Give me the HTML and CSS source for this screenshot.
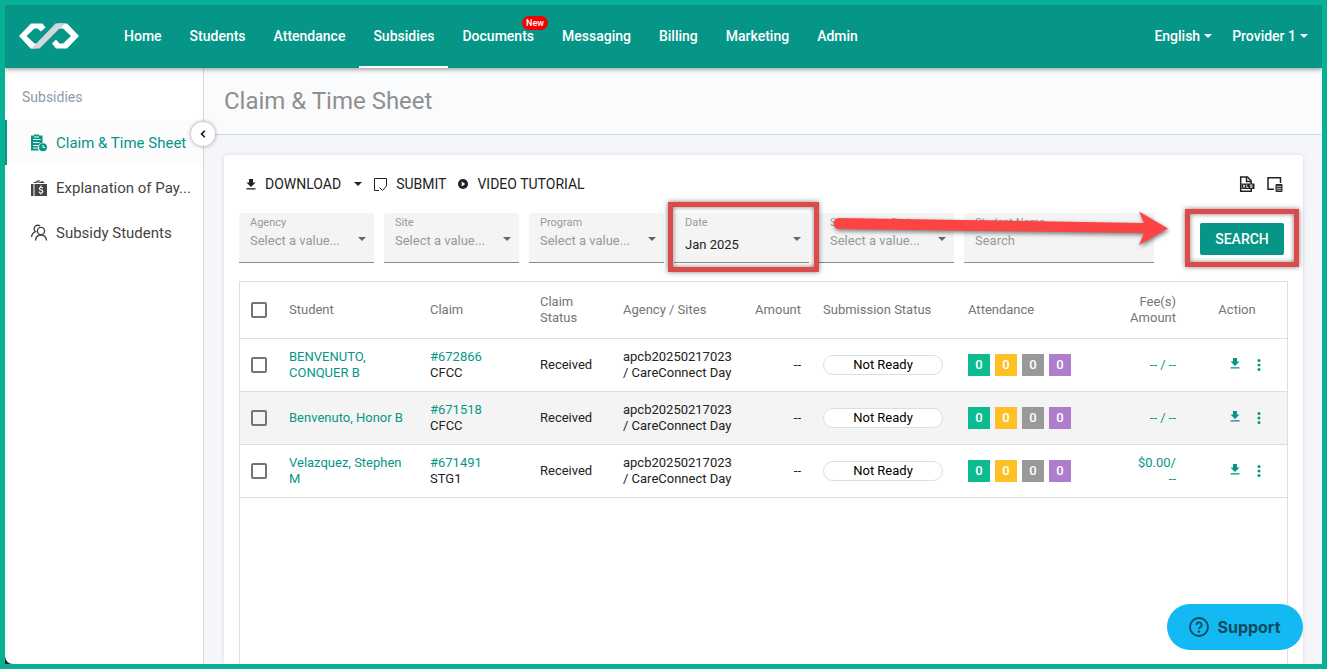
FILE: index.html
```html
<!DOCTYPE html>
<html lang="en">
<head>
    <meta charset="UTF-8">
    <meta name="viewport" content="width=device-width, initial-scale=1.0">
    <title>Claim &amp; Time Sheet</title>
    <link rel="stylesheet" href="styles.css">
</head>
<body>
    <svg class="defs" width="0" height="0" aria-hidden="true">
        <symbol id="icon-download" viewBox="0 0 10 11">
            <path d="M3 0h4v3.500h2.500L5 8 0.500 3.500H3z"/>
            <path d="M0.500 9.200h9v1.300h-9z"/>
        </symbol>
        <symbol id="icon-more" viewBox="0 0 4 12">
            <circle cx="2" cy="1.6" r="1.5"/>
            <circle cx="2" cy="6" r="1.5"/>
            <circle cx="2" cy="10.4" r="1.5"/>
        </symbol>
        <symbol id="icon-caret" viewBox="0 0 8 4">
            <path d="M0 0h8L4 4z"/>
        </symbol>
    </svg>

    <header class="navbar">
        <a href="#" class="logo" aria-label="Home page">
            <svg width="60" height="26" viewBox="0 0 60 26">
                <path d="M12 0.500h11.500L26.500 4.500 22 8.500 18.500 5.500H15.500L7.500 13l8 7.500h5L16 25.500h-4.500L0 13z" fill="#fff"/>
                <path d="M38 0.500h10L60 13 48 25.500H37L33 20.500l4-4 3.500 4h3.500l8-7.500-8-7.500H40z" fill="#fff"/>
                <path d="M12.500 25.500 36.500 0.500H46L41.500 5.500H40.500L20.500 25.500z" fill="#d3d6da"/>
            </svg>
        </a>
        <nav class="menu">
            <a href="#">Home</a>
            <a href="#">Students</a>
            <a href="#">Attendance</a>
            <a href="#" class="active">Subsidies</a>
            <a href="#">Documents<span class="badge">New</span></a>
            <a href="#">Messaging</a>
            <a href="#">Billing</a>
            <a href="#">Marketing</a>
            <a href="#">Admin</a>
        </nav>
        <div class="user-menu">
            <button type="button">English <svg width="8" height="4"><use href="#icon-caret"/></svg></button>
            <button type="button">Provider 1 <svg width="8" height="4"><use href="#icon-caret"/></svg></button>
        </div>
    </header>

    <div class="layout">
        <aside class="sidebar">
            <h2>Subsidies</h2>
            <a href="#" class="active">
                <svg width="18" height="18" viewBox="0 0 18 18">
                    <path fill="currentColor" fill-rule="evenodd" d="M1 1.500h3V0.500h5v1h3.500v7.200a5 5 0 0 0-3.800 7.800H1zM3 5v1h7.500V5zM3 8v1h6.500V8zM3 11v1h5v-1zM3 13.500v1h5v-1zM4 2.500v1h5v-1z"/>
                    <circle cx="13" cy="13.200" r="4" fill="currentColor"/>
                    <path d="M13 11v2.400h2.200" fill="none" stroke="#fff"/>
                </svg>
                <span>Claim &amp; Time Sheet</span>
            </a>
            <a href="#" title="Explanation of Payments">
                <svg width="18" height="18" viewBox="0 0 18 18" fill="currentColor">
                    <path d="M1 5h2.500v12H1zM2.500 4 9 1l1.200 1L6 4zM7 4l5.500-2L15 4z"/>
                    <path fill-rule="evenodd" d="M4.500 5H17v12H4.500zM10.300 6.500v1.200a2 2 0 0 0-1.500 1.900c0 1.200.9 1.600 1.900 1.900s1.400.5 1.400 1.100-.5.900-1.100.9-1.300-.3-1.400-1H8.500c.1 1 .8 1.700 1.800 1.900v1.100h1.200v-1.100c1-.2 1.800-.9 1.800-1.900 0-1.200-.9-1.700-2-2s-1.400-.5-1.400-1 .4-.8 1-.8 1.100.3 1.200.9h1.100c-.1-.9-.7-1.600-1.700-1.900V6.500z"/>
                </svg>
                <span>Explanation of Pay...</span>
            </a>
            <a href="#">
                <svg width="18" height="18" viewBox="0 0 18 18" fill="none" stroke="currentColor" stroke-width="1.400">
                    <circle cx="11" cy="7" r="3.600"/>
                    <path d="M5.500 16.500c.3-3.500 2-5.500 5.500-5.500s5.200 2 5.500 5.500"/>
                    <path d="M10 2a3.600 3.600 0 1 0-4.500 5.700C3 8.700 1.800 10.500 1.500 13"/>
                </svg>
                <span>Subsidy Students</span>
            </a>
            <button type="button" class="collapse" aria-label="Collapse sidebar">
                <svg width="6" height="8" viewBox="0 0 6 8"><path d="M4.800 0.800 1.600 4l3.200 3.200" fill="none" stroke="#111" stroke-width="1.600"/></svg>
            </button>
        </aside>

        <main class="content">
            <div class="page-title">
                <h1>Claim &amp; Time Sheet</h1>
            </div>

            <section class="card">
                <div class="toolbar">
                    <button type="button" class="download">
                        <svg width="10" height="11"><use href="#icon-download"/></svg>
                        Download
                        <svg class="caret" width="8" height="4"><use href="#icon-caret"/></svg>
                    </button>
                    <button type="button">
                        <svg width="13" height="13" viewBox="0 0 13 13" fill="none" stroke="currentColor"><path d="M5 12.500H0.500v-12h12V8L8.500 12.500 5.500 9.500"/></svg>
                        Submit
                    </button>
                    <button type="button">
                        <svg width="10" height="10" viewBox="0 0 10 10"><circle cx="5" cy="5" r="5"/><path d="M3.700 2.600 7.300 5 3.700 7.400z" fill="#fff"/></svg>
                        Video Tutorial
                    </button>
                    <div class="tools">
                        <button type="button" aria-label="Export to XLSX">
                            <svg width="16" height="16" viewBox="0 0 16 16">
                                <path d="M1.700 15.200h10.500V5L8.500 1H1.700z" fill="none" stroke="currentColor" stroke-width="1.500"/>
                                <path d="M7.500 1v4.500h4.500" fill="none" stroke="currentColor" stroke-width="1.500"/>
                                <path d="M2.500 7.500h13v5.500h-13z"/>
                                <path d="M4 8.700l2 3m0-3-2 3M7.700 8.500v2.900h1.800M13.500 8.900h-2.200v1.200h1.800v1.300h-2" fill="none" stroke="#fff" stroke-width=".8"/>
                            </svg>
                        </button>
                        <button type="button" aria-label="Choose columns">
                            <svg width="16" height="16" viewBox="0 0 16 16">
                                <path d="M7 13.300H1V1.700h12.500V7" fill="none" stroke="currentColor" stroke-width="1.500"/>
                                <rect x="8.500" y="8" width="7" height="8" rx="1"/>
                                <path d="M9.500 10.300h5M9.500 12.300h5M9.500 14.200h5" stroke="#fff" stroke-width=".7"/>
                            </svg>
                        </button>
                    </div>
                </div>

                <form class="filters">
                    <div class="field">
                        <label for="agency">Agency</label>
                        <select id="agency"><option>Select a value...</option></select>
                        <svg class="caret" width="8" height="4"><use href="#icon-caret"/></svg>
                    </div>
                    <div class="field">
                        <label for="site">Site</label>
                        <select id="site"><option>Select a value...</option></select>
                        <svg class="caret" width="8" height="4"><use href="#icon-caret"/></svg>
                    </div>
                    <div class="field">
                        <label for="program">Program</label>
                        <select id="program"><option>Select a value...</option></select>
                        <svg class="caret" width="8" height="4"><use href="#icon-caret"/></svg>
                    </div>
                    <div class="field filled highlight">
                        <label for="date">Date</label>
                        <select id="date"><option>Jan 2025</option></select>
                        <svg class="caret" width="8" height="4"><use href="#icon-caret"/></svg>
                    </div>
                    <div class="field">
                        <label for="status">Submission Status</label>
                        <select id="status"><option>Select a value...</option></select>
                        <svg class="caret" width="8" height="4"><use href="#icon-caret"/></svg>
                        <svg class="arrow" width="340" height="44" viewBox="0 0 340 44">
                            <path d="M7 7 312 12 307 0.500 336 17.500 307 34 312 22 7 18A5.500 5.500 0 0 1 7 7z"/>
                        </svg>
                    </div>
                    <div class="field wide">
                        <label for="student">Student Name</label>
                        <input type="text" id="student" placeholder="Search">
                    </div>
                    <div class="search highlight">
                        <button type="button">Search</button>
                    </div>
                </form>

                <div class="grid">
                    <table>
                        <colgroup>
                            <col class="col-check"><col class="col-student"><col class="col-claim"><col class="col-status"><col class="col-agency"><col class="col-amount"><col class="col-submission"><col><col class="col-amount"><col class="col-action">
                        </colgroup>
                        <thead>
                            <tr>
                                <th><input type="checkbox" aria-label="Select all"></th>
                                <th>Student</th>
                                <th>Claim</th>
                                <th>Claim Status</th>
                                <th>Agency / Sites</th>
                                <th class="right">Amount</th>
                                <th>Submission Status</th>
                                <th>Attendance</th>
                                <th class="right">Fee(s) Amount</th>
                                <th class="center">Action</th>
                            </tr>
                        </thead>
                        <tbody>
                            <tr>
                                <td><input type="checkbox" aria-label="Select BENVENUTO, CONQUER B"></td>
                                <td><a href="#">BENVENUTO, CONQUER B</a></td>
                                <td><a href="#">#672866</a><br>CFCC</td>
                                <td>Received</td>
                                <td class="sites">apcb20250217023<br>/ CareConnect Day</td>
                                <td class="right">--</td>
                                <td><span class="pill">Not Ready</span></td>
                                <td><div class="counts"><span class="green">0</span><span class="yellow">0</span><span class="gray">0</span><span class="purple">0</span></div></td>
                                <td class="right"><a href="#">-- / --</a></td>
                                <td><div class="actions">
                                    <button type="button" aria-label="Download"><svg width="10" height="11"><use href="#icon-download"/></svg></button>
                                    <button type="button" aria-label="More"><svg width="4" height="12"><use href="#icon-more"/></svg></button>
                                </div></td>
                            </tr>
                            <tr>
                                <td><input type="checkbox" aria-label="Select Benvenuto, Honor B"></td>
                                <td><a href="#">Benvenuto, Honor B</a></td>
                                <td><a href="#">#671518</a><br>CFCC</td>
                                <td>Received</td>
                                <td class="sites">apcb20250217023<br>/ CareConnect Day</td>
                                <td class="right">--</td>
                                <td><span class="pill">Not Ready</span></td>
                                <td><div class="counts"><span class="green">0</span><span class="yellow">0</span><span class="gray">0</span><span class="purple">0</span></div></td>
                                <td class="right"><a href="#">-- / --</a></td>
                                <td><div class="actions">
                                    <button type="button" aria-label="Download"><svg width="10" height="11"><use href="#icon-download"/></svg></button>
                                    <button type="button" aria-label="More"><svg width="4" height="12"><use href="#icon-more"/></svg></button>
                                </div></td>
                            </tr>
                            <tr>
                                <td><input type="checkbox" aria-label="Select Velazquez, Stephen M"></td>
                                <td><a href="#">Velazquez, Stephen<br>M</a></td>
                                <td><a href="#">#671491</a><br>STG1</td>
                                <td>Received</td>
                                <td class="sites">apcb20250217023<br>/ CareConnect Day</td>
                                <td class="right">--</td>
                                <td><span class="pill">Not Ready</span></td>
                                <td><div class="counts"><span class="green">0</span><span class="yellow">0</span><span class="gray">0</span><span class="purple">0</span></div></td>
                                <td class="right"><a href="#">$0.00/<br>--</a></td>
                                <td><div class="actions">
                                    <button type="button" aria-label="Download"><svg width="10" height="11"><use href="#icon-download"/></svg></button>
                                    <button type="button" aria-label="More"><svg width="4" height="12"><use href="#icon-more"/></svg></button>
                                </div></td>
                            </tr>
                        </tbody>
                    </table>
                </div>
            </section>
        </main>
    </div>

    <button type="button" class="support">
        <svg width="20" height="20" viewBox="0 0 20 20" fill="none" stroke="currentColor" stroke-width="1.800">
            <circle cx="10" cy="10" r="9"/>
            <path d="M7.400 8a2.600 2.600 0 1 1 3.900 2.200c-.8.500-1.300.9-1.300 1.800"/>
            <circle cx="10" cy="14.500" r="1.200" fill="currentColor" stroke="none"/>
        </svg>
        Support
    </button>
</body>
</html>
```
FILE: styles.css
```css
* {
    margin: 0;
    padding: 0;
    box-sizing: border-box;
}
body {
    display: flex;
    flex-direction: column;
    height: 100vh;
    overflow: hidden;
    border: 5px solid #06b093;
    background-color: #222;
    font-family: Roboto, "Liberation Sans", sans-serif;
    font-size: 13px;
    line-height: 16px;
    color: #222;
}
a {
    color: #069688;
    text-decoration: none;
}
button {
    border: none;
    background: none;
    font: inherit;
    color: inherit;
    cursor: pointer;
}
svg {
    flex-shrink: 0;
}
svg.defs {
    position: absolute;
}
use {
    fill: currentColor;
}

/* top bar */
.navbar {
    position: relative;
    z-index: 2;
    display: flex;
    flex-shrink: 0;
    height: 63px;
    background-color: #069688;
    box-shadow: 0 1px 5px rgba(0, 0, 0, 0.45);
    color: white;
    font-size: 14px;
    font-weight: 500;
}
.logo {
    display: flex;
    align-items: center;
    width: 105px;
    padding: 0 0 2px 14px;
}
.menu {
    display: flex;
}
.menu a {
    position: relative;
    display: flex;
    align-items: center;
    padding: 0 14px;
    border-bottom: 2px solid transparent;
    color: white;
}
.menu a.active {
    border-bottom-color: white;
}
.badge {
    position: absolute;
    top: 11px;
    right: 0;
    padding: 0 4px;
    border-radius: 7px;
    background-color: #f40000;
    font-size: 9px;
    line-height: 14px;
}
.user-menu {
    display: flex;
    gap: 20px;
    margin-left: auto;
    padding-right: 14px;
}
.user-menu button {
    display: flex;
    align-items: center;
    gap: 4px;
    padding-bottom: 2px;
}

.layout {
    display: flex;
    flex: 1;
    min-height: 0;
}

/* sidebar */
.sidebar {
    position: relative;
    z-index: 1;
    flex: 0 0 199px;
    min-width: 0;
    padding-top: 21px;
    border-right: 1px solid #d5d8dc;
    border-bottom-left-radius: 8px;
    background-color: white;
}
.sidebar h2 {
    margin-bottom: 15px;
    padding-left: 17px;
    font-size: 14px;
    font-weight: 400;
    color: #8d9aa8;
}
.sidebar a {
    display: flex;
    align-items: center;
    gap: 8px;
    height: 45px;
    padding-left: 23px;
    border-left: 2px solid transparent;
    font-size: 15px;
    color: #444;
    white-space: nowrap;
}
.sidebar a.active {
    border-left-color: #069688;
    background-color: #fcfcfc;
    color: #069688;
}
.collapse {
    position: absolute;
    top: 54px;
    right: -12px;
    display: flex;
    align-items: center;
    justify-content: center;
    width: 24px;
    height: 24px;
    border-radius: 50%;
    background-color: white;
    box-shadow: 0 0 4px rgba(0, 0, 0, 0.4);
}

/* main area */
.content {
    display: flex;
    flex: 1;
    flex-direction: column;
    min-width: 0;
    background-color: #f4f6fa;
}
.page-title {
    padding: 18px 20px;
    border-bottom: 1px solid #cbd9e6;
    background-color: #fafbfd;
}
h1 {
    font-size: 24px;
    font-weight: 400;
    line-height: 30px;
    color: #8f8f8f;
}
.card {
    display: flex;
    flex: 1;
    flex-direction: column;
    min-height: 0;
    margin: 20px 19px 0 20px;
    padding: 15px 15px 0;
    border-radius: 4px 4px 0 0;
    background-color: white;
    box-shadow: 0 0 4px rgba(0, 0, 0, 0.12);
}
.toolbar {
    display: flex;
    align-items: center;
    gap: 12px;
    height: 28px;
    padding: 0 5px 0 7px;
}
.toolbar button {
    display: flex;
    align-items: center;
    gap: 9px;
    font-size: 14px;
    text-transform: uppercase;
}
.toolbar .caret {
    margin-left: 4px;
}
.toolbar svg {
    fill: currentColor;
}
.toolbar svg [fill="none"], .toolbar svg[fill="none"] {
    fill: none;
}
.tools {
    display: flex;
    gap: 12px;
    margin-left: auto;
}

.filters {
    display: flex;
    gap: 10px;
    margin: 15px 0 18px;
}
.field {
    position: relative;
    flex: 0 1 135px;
    min-width: 0;
    height: 50px;
    padding: 2px 11px 0;
    border-bottom: 1px solid #8c8c8c;
    border-radius: 3px 3px 0 0;
    background-color: #f4f4f4;
}
.field.wide {
    flex-basis: 190px;
}
.field label {
    display: block;
    font-size: 11px;
    line-height: 16px;
    color: #999;
    white-space: nowrap;
}
.field select, .field input {
    display: block;
    width: 100%;
    height: 20px;
    border: none;
    outline: none;
    background: transparent;
    appearance: none;
    font: inherit;
    color: #999;
}
.field input {
    padding-bottom: 2px;
}
.field input::placeholder {
    color: #999;
}
.field.filled select {
    height: 28px;
    color: #222;
}
.field .caret {
    position: absolute;
    top: 24px;
    right: 8px;
    color: #666;
}
.search {
    align-self: center;
    margin: 2px 4px 0 auto;
}
.search button {
    width: 84px;
    height: 32px;
    border-radius: 2px;
    background-color: #069688;
    font-size: 14px;
    font-weight: 500;
    color: white;
    text-transform: uppercase;
}

/* callouts over the filters */
.highlight {
    position: relative;
}
.highlight::after {
    content: "";
    position: absolute;
    inset: -11px -10px -10px -6px;
    z-index: 1;
    border: 5px solid #dc4b4b;
    box-shadow: 0 0 5px rgba(0, 0, 0, 0.5), inset 0 0 5px rgba(0, 0, 0, 0.5);
    pointer-events: none;
}
.search.highlight::after {
    inset: -14px -15px -12px;
}
.arrow {
    position: absolute;
    top: -2px;
    left: 13px;
    z-index: 2;
    overflow: visible;
    fill: #fc4444;
    filter: drop-shadow(1px 2px 2px rgba(0, 0, 0, 0.5));
    pointer-events: none;
}

/* claims table */
.grid {
    flex: 1;
    border: 1px solid #dedede;
    border-bottom: none;
}
table {
    width: 100%;
    table-layout: fixed;
    border-collapse: separate;
    border-spacing: 0;
}
.col-check { width: 38px; }
.col-student { width: 141px; }
.col-claim { width: 110px; }
.col-status { width: 83px; }
.col-agency { width: 130px; }
.col-amount { width: 70px; }
.col-submission { width: 145px; }
.col-action { width: 100px; }
th, td {
    height: 53px;
    padding: 0 11px;
    border-bottom: 1px solid #dedede;
    text-align: left;
    vertical-align: middle;
}
th {
    height: 57px;
    font-weight: 400;
    color: #757575;
}
tbody tr:nth-child(even) {
    background-color: #f4f4f4;
}
.sites {
    white-space: nowrap;
}
.right {
    text-align: right;
}
.center {
    text-align: center;
}
input[type="checkbox"] {
    display: block;
    width: 16px;
    height: 16px;
    border: 2px solid #757575;
    border-radius: 2px;
    appearance: none;
}
.pill {
    display: block;
    width: 120px;
    height: 20px;
    border: 1px solid #dedede;
    border-radius: 10px;
    background-color: white;
    line-height: 18px;
    text-align: center;
    color: #000;
}
.counts {
    display: flex;
    gap: 5px;
}
.counts span {
    width: 22px;
    height: 22px;
    font-weight: 500;
    line-height: 22px;
    text-align: center;
    color: white;
}
.green { background-color: #0dbb91; }
.yellow { background-color: #fec125; }
.gray { background-color: #999; }
.purple { background-color: #ae7dcb; }
.actions {
    display: flex;
    align-items: flex-start;
    gap: 17px;
    padding-left: 32px;
    color: #069688;
}
.actions button {
    display: flex;
    height: 14px;
}
.actions button:last-child {
    align-items: center;
}

.support {
    position: fixed;
    right: 24px;
    bottom: 19px;
    z-index: 3;
    display: flex;
    align-items: center;
    justify-content: center;
    gap: 8px;
    width: 136px;
    height: 46px;
    border-radius: 23px;
    background-color: #12b9f2;
    font-family: Inter, sans-serif;
    font-size: 16px;
    font-weight: 700;
    color: #0f4a5c;
}
```
